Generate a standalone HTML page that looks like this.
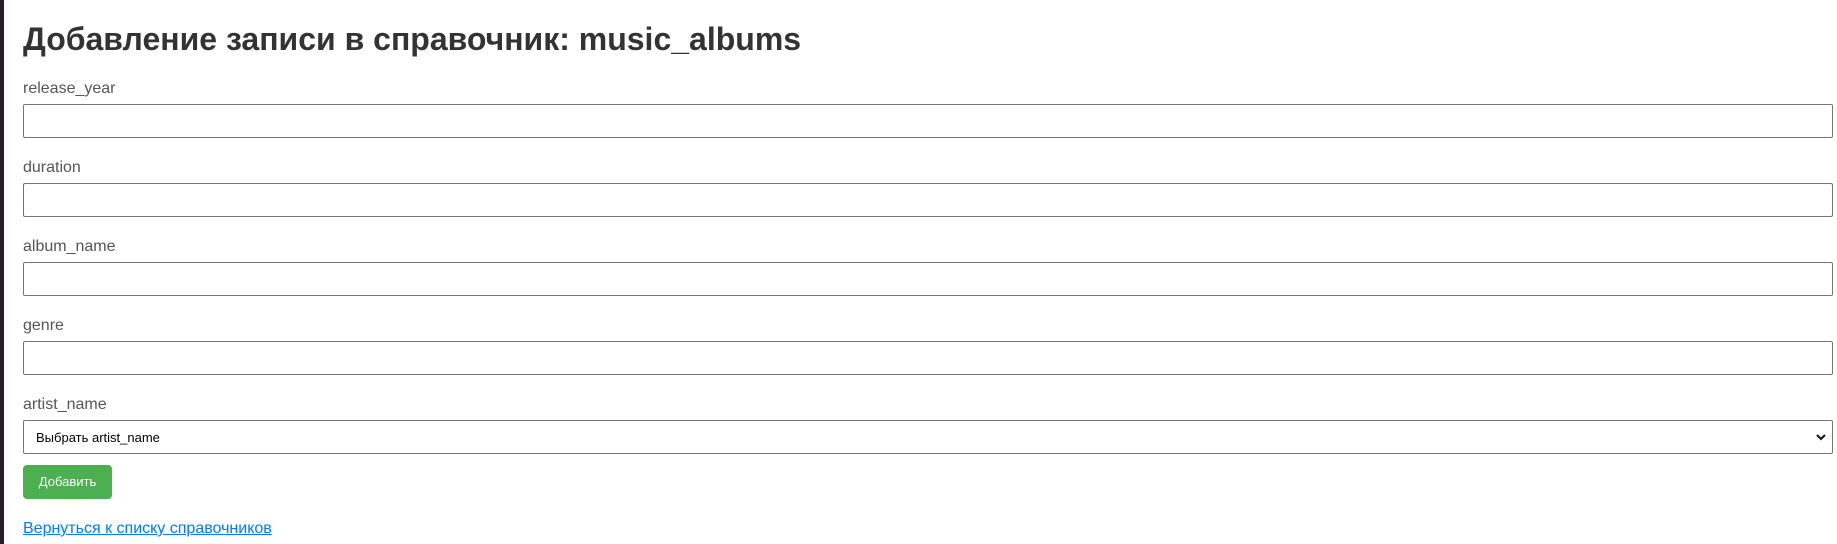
<!DOCTYPE html>
<html><head><meta charset="utf-8"><style>
html,body{margin:0;padding:0;background:#fff;}
body{width:1837px;height:544px;overflow:hidden;position:relative;font-family:"Liberation Sans",Arial,sans-serif;}
.bar{position:absolute;left:0;top:0;width:4px;height:544px;background:#2b1a2b;}
.wrap{position:absolute;left:23px;top:0;width:1810px;}
h1{margin:21px 0 0 0;font-size:32px;line-height:37px;font-weight:bold;color:#333;}
.grp{margin-top:22px;}
.grp+.grp{margin-top:21px;}
label{display:block;font-size:16px;line-height:18px;color:#555;margin-bottom:6px;}
.inp{box-sizing:border-box;height:34px;width:1810px;border:1px solid #767676;border-radius:2px;background:#fff;}
.sel{position:relative;font-size:13px;color:#000;}
.sel span{position:absolute;left:12px;top:9px;}
.sel svg{position:absolute;right:6px;top:12px;}
.btn{margin-top:11px;width:89px;height:34px;background:#4caf50;border-radius:4px;color:#fff;font-size:13px;line-height:34px;text-align:center;}
a{display:block;margin-top:21px;color:#007bff;font-size:16px;line-height:18px;text-decoration:underline;}
</style></head><body>
<div class="bar"></div>
<div class="wrap">
<h1>Добавление записи в справочник: music_albums</h1>
<div class="grp"><label>release_year</label><div class="inp"></div></div>
<div class="grp"><label>duration</label><div class="inp"></div></div>
<div class="grp"><label>album_name</label><div class="inp"></div></div>
<div class="grp"><label>genre</label><div class="inp"></div></div>
<div class="grp"><label>artist_name</label><div class="inp sel"><span>Выбрать artist_name</span><svg width="10" height="8" viewBox="0 0 10 8"><path d="M1 2 L5 6 L9 2" stroke="#111" stroke-width="2" fill="none"/></svg></div></div>
<div class="btn">Добавить</div>
<a>Вернуться к списку справочников</a>
</div>
</body></html>
